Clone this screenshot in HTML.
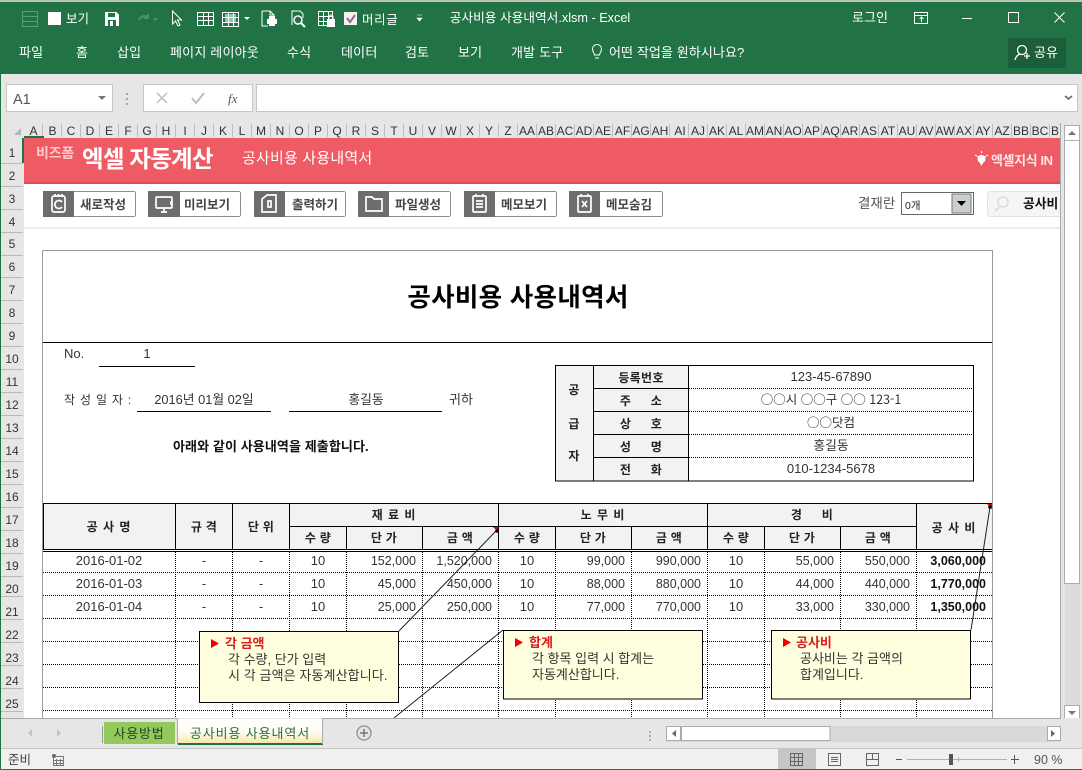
<!DOCTYPE html>
<html lang="ko"><head><meta charset="utf-8"><title>공사비용 사용내역서</title>
<style>
html,body{margin:0;padding:0;background:#fff;width:1082px;height:770px;overflow:hidden}
svg{display:block}
text{font-family:"Liberation Sans","Noto Sans CJK KR",sans-serif;font-size:13px;fill:#222}
.c{text-anchor:middle}.r{text-anchor:end}
.w{fill:#fff}.b{font-weight:bold}
.h text{font-size:12px;fill:#333;text-anchor:middle}
.rh text{font-size:12px;fill:#333;text-anchor:middle}
.th text{font-size:12px;font-weight:bold;fill:#222;text-anchor:middle;letter-spacing:.3px}
.d text{font-size:13px;fill:#333}
.d text.r{font-size:12.5px}
.cr{shape-rendering:crispEdges}
</style></head><body>
<svg width="1082" height="770" viewBox="0 0 1082 770" xmlns="http://www.w3.org/2000/svg">
<rect width="1082" height="770" fill="#e6e6e6"/>
<rect x="0" y="0" width="1082" height="2" fill="#b9c4b5"/>
<rect x="0" y="2" width="1082" height="72" fill="#217346"/>
<rect x="0" y="74" width="1" height="696" fill="#217346"/>
<rect x="0" y="769" width="1082" height="1" fill="#217346"/>

<!-- QAT -->
<g class="cr">
<g fill="none" stroke="#5f9a79"><rect x="22.5" y="11.5" width="15" height="15"/><path d="M22 16.5h16M22 21.5h16"/></g>
<rect x="48" y="12" width="13" height="13" fill="#fff"/>
<path d="M105 12h11l3 3v11h-14z" fill="#fff"/><rect x="108" y="13" width="7" height="4" fill="#217346"/><rect x="108" y="20" width="8" height="6" fill="#217346"/><rect x="110" y="21" width="3" height="5" fill="#fff"/>
<g fill="none" stroke="#fff"><rect x="197.5" y="12.5" width="16" height="13"/><path d="M197 16.5h17M197 20.5h17M203.5 13v13M208.5 13v13"/>
<rect x="222.5" y="12.5" width="16" height="14"/><path d="M222 17.5h17M222 22.5h17M228.5 13v13M233.5 13v13"/></g>
<rect x="225" y="14" width="11" height="8" fill="#fff" opacity=".55"/>
<rect x="344" y="12" width="13" height="13" fill="#f3f3f3"/>
</g>
<text x="66" y="23" class="w" style="font-size:12.5px">보기</text>
<path d="M139 20a6 6 0 0 1 9-3" fill="none" stroke="#4d8e6c" stroke-width="2"/><path d="M149 13v6h-6z" fill="#4d8e6c"/><path d="M153 18h5l-2.500 3z" fill="#4d8e6c"/>
<path d="M172.500 11v13l3-3 2.500 5 2-1-2.500-5h4z" fill="#217346" stroke="#fff"/>
<path d="M244 17h6l-3 3z" fill="#fff"/>
<path d="M262 11h8l4 4v5M262 11v15h6M270 11v4h4" fill="none" stroke="#fff"/><rect x="267" y="19" width="10" height="5" fill="#fff"/><rect x="269" y="16" width="6" height="3" fill="#fff"/><rect x="269" y="24" width="6" height="2" fill="#fff"/>
<path d="M292 25V11h8l3 3v4" fill="none" stroke="#fff"/><circle cx="298" cy="20" r="4" fill="none" stroke="#fff" stroke-width="1.500"/><path d="M301 23l4 4" stroke="#fff" stroke-width="2"/>
<g class="cr" fill="none" stroke="#fff"><rect x="318.500" y="11.500" width="14" height="14"/><path d="M318 16.500h15M318 21.500h15M323.500 12v14M328.500 12v14"/></g>
<rect x="327" y="19" width="8" height="8" fill="#fff"/><path d="M329 19v-2a2 2 0 0 1 4 0v2" fill="none" stroke="#fff"/>
<path d="M347 18l3 4 5-7" fill="none" stroke="#8e6f8e" stroke-width="2"/>
<text x="362" y="24" class="w" style="font-size:12.500px;letter-spacing:.6px">머리글</text>
<path d="M417 15h5M417 18h5l-2.500 3z" fill="#fff" stroke="#fff" stroke-width=".6"/>
<text x="540" y="22" class="c w" style="font-size:12.700px">공사비용 사용내역서.xlsm - Excel</text>
<text x="870" y="22" class="c w" style="font-size:13px">로그인</text>
<g class="cr" fill="none" stroke="#fff"><rect x="914.500" y="12.500" width="13" height="11"/><path d="M914 15.500h14"/><path d="M921.500 22v-5M919.500 19l2-2 2 2"/><path d="M962 18.500h10"/><rect x="1008.500" y="12.500" width="10" height="10"/></g>
<path d="M1054.500 12.500l10 10M1064.500 12.500l-10 10" stroke="#fff" fill="none"/>

<!-- menu -->
<g style="letter-spacing:.2px">
<text x="19" y="57" class="w">파일</text><text x="76" y="57" class="w">홈</text><text x="117" y="57" class="w">삽입</text>
<text x="170" y="57" class="w">페이지 레이아웃</text><text x="287" y="57" class="w">수식</text><text x="341" y="57" class="w">데이터</text>
<text x="405" y="57" class="w">검토</text><text x="458" y="57" class="w">보기</text><text x="511" y="57" class="w">개발 도구</text>
<text x="609" y="57" class="w" style="letter-spacing:.1px;font-size:13px">어떤 작업을 원하시나요?</text>
</g>
<path d="M594.500 55c0-2-2-3-2-6a4.500 4.500 0 0 1 9 0c0 3-2 4-2 6zM595 58h4" fill="none" stroke="#fff"/>
<rect x="1008" y="38" width="58" height="30" fill="#1b5e39"/>
<circle cx="1022" cy="50" r="4.500" fill="none" stroke="#fff" stroke-width="1.300"/><path d="M1015 60c1-4 3-5 5-6M1024 56h6M1027 53v6" fill="none" stroke="#fff" stroke-width="1.300"/>
<text x="1034" y="57" class="w">공유</text>

<!-- formula bar -->
<g class="cr" fill="#fff" stroke="#c6c6c6"><rect x="6.500" y="84.500" width="106" height="27"/><rect x="143.500" y="84.500" width="109" height="27"/><rect x="256.500" y="84.500" width="821" height="27"/></g>
<text x="13" y="104" style="font-size:14.500px;fill:#555">A1</text>
<path d="M98 96h8l-4 4z" fill="#777"/>
<g fill="#a6a6a6"><rect x="126" y="93" width="2" height="2"/><rect x="126" y="98" width="2" height="2"/><rect x="126" y="103" width="2" height="2"/></g>
<path d="M157 93l10 10M167 93l-10 10" stroke="#bdbdbd" stroke-width="1.500" fill="none"/>
<path d="M192 98l4 5 8-10" stroke="#bdbdbd" stroke-width="2" fill="none"/>
<text x="228" y="103" style="font-family:'Liberation Serif',serif;font-style:italic;font-size:13px;fill:#555">fx</text>
<path d="M1065 96l3.500 3 3.500-3" stroke="#666" stroke-width="1.600" fill="none"/>

<!-- column headers -->
<rect x="1" y="123" width="1059" height="15" fill="#e6e6e6"/>
<path d="M14 135l7-7v7z" fill="#b4b4b4"/>
<g class="h">
<text x="33.500" y="135">A</text><text x="52.500" y="135">B</text><text x="71" y="135">C</text><text x="90" y="135">D</text><text x="109" y="135">E</text><text x="128" y="135">F</text><text x="147" y="135">G</text><text x="166" y="135">H</text><text x="185" y="135">I</text><text x="204" y="135">J</text><text x="223" y="135">K</text><text x="242" y="135">L</text><text x="261" y="135">M</text><text x="280" y="135">N</text><text x="299" y="135">O</text><text x="318" y="135">P</text><text x="337" y="135">Q</text><text x="356" y="135">R</text><text x="375" y="135">S</text><text x="394" y="135">T</text><text x="413" y="135">U</text><text x="432" y="135">V</text><text x="451" y="135">W</text><text x="470" y="135">X</text><text x="489" y="135">Y</text><text x="508" y="135">Z</text><text x="527" y="135">AA</text><text x="546" y="135">AB</text><text x="565" y="135">AC</text><text x="584" y="135">AD</text><text x="603" y="135">AE</text><text x="622.500" y="135">AF</text><text x="641" y="135">AG</text><text x="660" y="135">AH</text><text x="680" y="135">AI</text><text x="698" y="135">AJ</text><text x="717" y="135">AK</text><text x="736" y="135">AL</text><text x="755" y="135">AM</text><text x="774" y="135">AN</text><text x="793" y="135">AO</text><text x="812" y="135">AP</text><text x="831" y="135">AQ</text><text x="850" y="135">AR</text><text x="869" y="135">AS</text><text x="888" y="135">AT</text><text x="907" y="135">AU</text><text x="926" y="135">AV</text><text x="945" y="135">AW</text><text x="964" y="135">AX</text><text x="983" y="135">AY</text><text x="1002" y="135">AZ</text><text x="1021" y="135">BB</text><text x="1040" y="135">BC</text><text x="1055" y="135">B</text>
</g>
<path class="cr" d="M42.500 124v13M61.500 124v13M80.500 124v13M99.500 124v13M118.500 124v13M137.500 124v13M156.500 124v13M175.500 124v13M194.500 124v13M213.500 124v13M232.500 124v13M251.500 124v13M270.500 124v13M289.500 124v13M308.500 124v13M327.500 124v13M346.500 124v13M365.500 124v13M384.500 124v13M403.500 124v13M422.500 124v13M441.500 124v13M460.500 124v13M479.500 124v13M498.500 124v13M517.500 124v13M536.500 124v13M555.500 124v13M574.500 124v13M593.500 124v13M612.500 124v13M631.500 124v13M650.500 124v13M669.500 124v13M688.500 124v13M707.500 124v13M726.500 124v13M745.500 124v13M764.500 124v13M783.500 124v13M802.500 124v13M821.500 124v13M840.500 124v13M859.500 124v13M878.500 124v13M897.500 124v13M916.500 124v13M935.500 124v13M954.500 124v13M973.500 124v13M992.500 124v13M1011.500 124v13M1030.500 124v13M1049.500 124v13" stroke="#bdbdbd"/>
<rect x="24" y="136" width="20" height="2" fill="#217346"/>

<!-- row header -->
<rect x="1" y="138" width="23" height="580" fill="#e6e6e6"/>
<rect x="22" y="138" width="2" height="25" fill="#217346"/>
<path class="cr" d="M1 163.500h22M1 186.500h22M1 209.500h22M1 232.500h22M1 255.500h22M1 277.500h22M1 300.500h22M1 323.500h22M1 346.500h22M1 369.500h22M1 392.500h22M1 415.500h22M1 438.500h22M1 461.500h22M1 484.500h22M1 507.500h22M1 530.500h22M1 553.500h22M1 576.500h22M1 596.500h22M1 619.500h22M1 642.500h22M1 665.500h22M1 688.500h22M1 711.500h22" stroke="#b9b9b9"/>
<g class="rh">
<text x="12" y="157">1</text><text x="12" y="180">2</text><text x="12" y="203">3</text><text x="12" y="226">4</text><text x="12" y="248">5</text><text x="12" y="271">6</text><text x="12" y="294">7</text><text x="12" y="317">8</text><text x="12" y="340">9</text><text x="12" y="363">10</text><text x="12" y="386">11</text><text x="12" y="409">12</text><text x="12" y="432">13</text><text x="12" y="455">14</text><text x="12" y="478">15</text><text x="12" y="501">16</text><text x="12" y="524">17</text><text x="12" y="547">18</text><text x="12" y="570">19</text><text x="12" y="593">20</text><text x="12" y="616">21</text><text x="12" y="639">22</text><text x="12" y="662">23</text><text x="12" y="685">24</text><text x="12" y="708">25</text>
</g>

<!-- sheet -->
<rect x="24" y="138" width="1036" height="580" fill="#fff"/>
<rect x="1060" y="123" width="1" height="595" fill="#a8a8a8"/>
<rect x="24" y="138" width="1036" height="46" fill="#ee5b64"/>
<rect x="24" y="182" width="1036" height="2" fill="#dc4f58"/>
<rect x="24" y="227" width="1036" height="2" fill="#ececec"/>
<text x="36" y="158" class="b" style="font-size:14px;fill:#ffc9cc;letter-spacing:-.2px">비즈폼</text>
<text x="82" y="167" class="w b" style="font-size:23.500px;letter-spacing:-.8px">엑셀 자동계산</text>
<text x="242" y="163" class="w" style="font-size:15px;letter-spacing:.2px">공사비용 사용내역서</text>
<path d="M977 156h9l-2 5-2.500 5-2.500-5z" fill="#fff"/><circle cx="981.500" cy="159" r="4" fill="#fff"/><path d="M981.500 151v2M975 155l2 1M988 155l-2 1" stroke="#fff"/>
<text x="991" y="165" style="font-size:13px;font-weight:bold;fill:#ffe5e6;letter-spacing:-.4px">엑셀지식 IN</text>

<!-- buttons -->
<g class="cr">
<rect x="43.500" y="191.500" width="92" height="25" rx="2" fill="#fff" stroke="#8c8c8c"/><rect x="43" y="191" width="31" height="26" fill="#6d6d6d"/>
<rect x="148.500" y="191.500" width="92" height="25" rx="2" fill="#fff" stroke="#8c8c8c"/><rect x="148" y="191" width="32" height="26" fill="#6d6d6d"/>
<rect x="254.500" y="191.500" width="91" height="25" rx="2" fill="#fff" stroke="#8c8c8c"/><rect x="254" y="191" width="31" height="26" fill="#6d6d6d"/>
<rect x="358.500" y="191.500" width="92" height="25" rx="2" fill="#fff" stroke="#8c8c8c"/><rect x="358" y="191" width="31" height="26" fill="#6d6d6d"/>
<rect x="464.500" y="191.500" width="92" height="25" rx="2" fill="#fff" stroke="#8c8c8c"/><rect x="464" y="191" width="31" height="26" fill="#6d6d6d"/>
<rect x="569.500" y="191.500" width="93" height="25" rx="2" fill="#fff" stroke="#8c8c8c"/><rect x="569" y="191" width="31" height="26" fill="#6d6d6d"/>
</g>
<g fill="none" stroke="#fff" stroke-width="1.700">
<rect x="52" y="196" width="13" height="16" rx="2"/><path d="M62 202a4 4 0 1 0 0 5M55 194v3M58.500 194v3M62 194v3"/>
<rect x="156" y="197" width="16" height="11" rx="1"/><path d="M161 212h6M164 208v4"/>
<path d="M262 199l5-4h9v17h-14zM268 201h3v6h-3z"/>
<path d="M366 211v-14h6l2 2h8v12z"/>
<rect x="473" y="196" width="13" height="16" rx="1"/><path d="M476 201h7M476 204h7M476 207h7M476 194v3M483 194v3"/>
<rect x="578" y="196" width="13" height="16" rx="1"/><path d="M582 201l5 6M587 201l-5 6M581 194v3M588 194v3"/>
</g>
<path d="M170 201v4l3-2z" fill="#fff"/>
<g>
<text x="80" y="209" style="font-size:12.500px;font-weight:bold;fill:#444">새로작성</text>
<text x="184" y="209" style="font-size:12.500px;font-weight:bold;fill:#444">미리보기</text>
<text x="292" y="209" style="font-size:12.500px;font-weight:bold;fill:#444">출력하기</text>
<text x="395" y="209" style="font-size:12.500px;font-weight:bold;fill:#444">파일생성</text>
<text x="501" y="209" style="font-size:12.500px;font-weight:bold;fill:#444">메모보기</text>
<text x="606" y="209" style="font-size:12.500px;font-weight:bold;fill:#444">메모숨김</text>
</g>
<text x="858" y="208" style="font-size:13.500px;fill:#555">결재란</text>
<g class="cr"><rect x="901.500" y="192.500" width="72" height="22" fill="#fff" stroke="#666"/><rect x="952" y="194" width="19" height="19" fill="#c9ced1" stroke="#777"/></g>
<path d="M957 201h9l-4.500 5z" fill="#000"/>
<text x="905" y="209" style="font-size:10.500px;fill:#222">0개</text>
<rect x="987.500" y="191.500" width="80" height="25" rx="3" fill="#f5f5f5" stroke="#e1e1e1"/>
<rect x="1060" y="190" width="1" height="30" fill="#a8a8a8"/><rect x="1061" y="190" width="3" height="30" fill="#e6e6e6"/>
<circle cx="1003" cy="202" r="5" fill="none" stroke="#dcdcdc" stroke-width="1.500"/><path d="M999 207l-4 4" stroke="#dcdcdc" stroke-width="2"/>
<text x="1023" y="208" class="b" style="font-size:12.800px;fill:#111">공사비</text>

<!-- form frame -->
<g class="cr">
<path d="M42.500 250.500H992.500V718M42.500 250.500V718" fill="none" stroke="#9a9a9a"/>
<path d="M43 342.500h949" stroke="#000"/>
<path d="M99 366.500h96M137 411.500h134M289 411.500h153" stroke="#000"/>
</g>
<text x="518" y="306" class="c b" style="font-size:25.500px;fill:#000;letter-spacing:.3px">공사비용 사용내역서</text>
<text x="64" y="358" style="fill:#333">No.</text><text x="147" y="358" class="c" style="fill:#333">1</text>
<text x="64" y="404" style="fill:#333;font-size:12px;letter-spacing:.8px">작 성 일 자 :</text>
<text x="204" y="404" class="c" style="fill:#333;font-size:12.800px">2016년 01월 02일</text>
<text x="366" y="404" class="c" style="fill:#333;font-size:12.800px">홍길동</text>
<text x="449" y="404" style="fill:#333;font-size:13px">귀하</text>
<text x="173" y="451" class="b" style="font-size:13px;fill:#111;letter-spacing:.1px">아래와 같이 사용내역을 제출합니다.</text>

<!-- supplier -->
<g class="cr">
<rect x="555" y="365" width="133" height="116" fill="#f2f2f2"/>
<rect x="555.500" y="365.500" width="418" height="115.500" fill="none" stroke="#000"/>
<path d="M593.500 365v116M688.500 365v116M593 388.500h95M593 411.500h95M593 434.500h95M593 457.500h95" stroke="#000" fill="none"/>
<path d="M689 388.500h284M689 411.500h284M689 434.500h284M689 457.500h284" stroke="#000" stroke-dasharray="1 1"/>
</g>
<g class="th">
<text x="574" y="394">공</text><text x="574" y="428">급</text><text x="574" y="460">자</text>
<text x="641" y="382">등록번호</text><text x="641" y="405">주 　 소</text><text x="641" y="428">상 　 호</text><text x="641" y="451">성 　 명</text><text x="641" y="474">전 　 화</text>
</g>
<g>
<text x="831" y="381" class="c" style="fill:#333">123-45-67890</text>
<text x="831" y="404" class="c" style="fill:#333;font-size:12.500px;font-family:'Noto Sans CJK KR',sans-serif">○○시 ○○구 ○○ 123-1</text>
<text x="831" y="427" class="c" style="fill:#333;font-size:12.500px;font-family:'Noto Sans CJK KR',sans-serif">○○닷컴</text>
<text x="831" y="450" class="c" style="fill:#333;font-size:12.800px">홍길동</text>
<text x="831" y="473" class="c" style="fill:#333">010-1234-5678</text>
</g>

<!-- main table -->
<rect x="43" y="504" width="949" height="45" fill="#f2f2f2"/>
<g class="cr" fill="none" stroke="#000">
<path d="M43 503.500h949M43 549.500h949M43 551.500h949"/>
<path d="M289 526.500h627M43.500 503v46M175.500 503v46M232.500 503v46M289.500 503v46M346.500 526v23M422.500 526v23M498.500 503v46M555.500 526v23M631.500 526v23M707.500 503v46M764.500 526v23M840.500 526v23M916.500 503v46"/>
<path stroke-dasharray="1 1" d="M43 572.500h949M43 595.500h949M43 618.500h949M43 641.500h949M43 664.500h949M43 687.500h949M43 710.500h949M175.500 552v166M232.500 552v166M289.500 552v166M346.500 552v166M422.500 552v166M498.500 552v166M555.500 552v166M631.500 552v166M707.500 552v166M764.500 552v166M840.500 552v166M916.500 552v166"/>
</g>
<g class="th">
<text x="109" y="531" style="letter-spacing:1px">공 사 명</text><text x="204" y="531">규 격</text><text x="261" y="531">단 위</text>
<text x="394" y="519" style="letter-spacing:1px">재 료 비</text><text x="603" y="519" style="letter-spacing:1px">노 무 비</text><text x="812" y="519">경 　 비</text>
<text x="954" y="532" style="letter-spacing:1px">공 사 비</text>
<text x="318" y="542">수 량</text><text x="384" y="542">단 가</text><text x="460" y="542">금 액</text>
<text x="527" y="542">수 량</text><text x="593" y="542">단 가</text><text x="669" y="542">금 액</text>
<text x="736" y="542">수 량</text><text x="802" y="542">단 가</text><text x="878" y="542">금 액</text>
</g>
<g class="d">
<text x="109" y="565" class="c">2016-01-02</text><text x="204" y="565" class="c">-</text><text x="261" y="565" class="c">-</text><text x="318" y="565" class="c">10</text><text x="416" y="565" class="r">152,000</text><text x="492" y="565" class="r">1,520,000</text><text x="527" y="565" class="c">10</text><text x="625" y="565" class="r">99,000</text><text x="701" y="565" class="r">990,000</text><text x="736" y="565" class="c">10</text><text x="834" y="565" class="r">55,000</text><text x="910" y="565" class="r">550,000</text><text x="986" y="565" class="r b" style="fill:#111">3,060,000</text>
<text x="109" y="588" class="c">2016-01-03</text><text x="204" y="588" class="c">-</text><text x="261" y="588" class="c">-</text><text x="318" y="588" class="c">10</text><text x="416" y="588" class="r">45,000</text><text x="492" y="588" class="r">450,000</text><text x="527" y="588" class="c">10</text><text x="625" y="588" class="r">88,000</text><text x="701" y="588" class="r">880,000</text><text x="736" y="588" class="c">10</text><text x="834" y="588" class="r">44,000</text><text x="910" y="588" class="r">440,000</text><text x="986" y="588" class="r b" style="fill:#111">1,770,000</text>
<text x="109" y="611" class="c">2016-01-04</text><text x="204" y="611" class="c">-</text><text x="261" y="611" class="c">-</text><text x="318" y="611" class="c">10</text><text x="416" y="611" class="r">25,000</text><text x="492" y="611" class="r">250,000</text><text x="527" y="611" class="c">10</text><text x="625" y="611" class="r">77,000</text><text x="701" y="611" class="r">770,000</text><text x="736" y="611" class="c">10</text><text x="834" y="611" class="r">33,000</text><text x="910" y="611" class="r">330,000</text><text x="986" y="611" class="r b" style="fill:#111">1,350,000</text>
</g>

<!-- comments -->
<path d="M399 631L497 530M503 630L394 718M971 630L990 507" stroke="#222" fill="none"/>
<path d="M493 527h5v5z" fill="#e00"/><path d="M987 504h5v5z" fill="#e00"/>
<circle cx="497" cy="531" r="1.800" fill="#000"/><circle cx="990" cy="507" r="1.800" fill="#000"/>
<g class="cr" fill="#ffffdf" stroke="#000"><rect x="199.500" y="631.500" width="199" height="71"/><rect x="503.500" y="630.500" width="199" height="68.500"/><rect x="771.500" y="630.500" width="199" height="68.500"/></g>
<path d="M211 639l8 4.500-8 4.500z" fill="#e00"/><path d="M515 638l8 4.500-8 4.500z" fill="#e00"/><path d="M783 638l8 4.500-8 4.500z" fill="#e00"/>
<g>
<text x="225" y="648" class="b" style="font-size:13px;fill:#d91c1c">각 금액</text>
<text x="228" y="664" style="font-size:13px;fill:#333">각 수량, 단가 입력</text>
<text x="228" y="680" style="font-size:13px;fill:#333;letter-spacing:.1px">시 각 금액은 자동계산합니다.</text>
<text x="529" y="647" class="b" style="font-size:13px;fill:#d91c1c">합계</text>
<text x="532" y="663" style="font-size:13px;fill:#333">각 항목 입력 시 합계는</text>
<text x="532" y="679" style="font-size:13px;fill:#333">자동계산합니다.</text>
<text x="796" y="647" class="b" style="font-size:13px;fill:#d91c1c">공사비</text>
<text x="800" y="663" style="font-size:13px;fill:#333">공사비는 각 금액의</text>
<text x="800" y="679" style="font-size:13px;fill:#333">합계입니다.</text>
</g>

<!-- vertical scrollbar -->
<rect x="1061" y="123" width="21" height="595" fill="#e6e6e6"/>
<rect x="1065" y="140" width="15" height="565" fill="#dcdcdc"/>
<g class="cr" fill="#fff" stroke="#ababab"><rect x="1064.500" y="125.500" width="15" height="15"/><rect x="1064.500" y="140.500" width="15" height="443"/><rect x="1064.500" y="705.500" width="15" height="14"/></g>
<path d="M1068 135l4-4 4 4z" fill="#777"/><path d="M1068 711h8l-4 4z" fill="#777"/>

<!-- tabs -->
<rect x="1" y="718" width="1081" height="30" fill="#e6e6e6"/>
<path class="cr" d="M1 718.500h177M322 718.500h739" stroke="#a8a8a8"/>
<path d="M32 729v8l-4-4zM57 729v8l4-4z" fill="#c4c4c4"/>
<rect x="102" y="726" width="1" height="17" fill="#999"/>
<rect x="104" y="722" width="71" height="22" fill="#92c85c"/>
<text x="139" y="738" class="c" style="font-size:13px;fill:#1f4a22;letter-spacing:.8px">사용방법</text>
<defs><linearGradient id="t" x1="0" y1="0" x2="0" y2="1"><stop offset="0" stop-color="#fff"/><stop offset=".5" stop-color="#fffdf2"/><stop offset="1" stop-color="#fbe3a6"/></linearGradient></defs>
<rect x="178" y="719" width="144" height="25" fill="url(#t)"/>
<rect x="178" y="743" width="145" height="2" fill="#217346"/>
<path class="cr" d="M177.500 718v26M322.500 718v26" stroke="#a8a8a8"/>
<text x="250" y="738" class="c" style="font-size:13px;fill:#217346;letter-spacing:.9px">공사비용 사용내역서</text>
<circle cx="364" cy="733" r="7" fill="none" stroke="#8e8e8e" stroke-width="1.300"/><path d="M360 733h8M364 729v8" stroke="#777" stroke-width="1.500"/>
<g fill="#b0b0b0"><rect x="649" y="731" width="2" height="2"/><rect x="649" y="735" width="2" height="2"/><rect x="649" y="739" width="2" height="2"/></g>
<rect x="666" y="726" width="395" height="16" fill="#d9d9d9"/>
<g class="cr" fill="#fff" stroke="#ababab"><rect x="666.500" y="726.500" width="14" height="14"/><rect x="681.500" y="726.500" width="148.500" height="14"/><rect x="1047.500" y="726.500" width="13" height="14"/></g>
<path d="M676 730v7l-4-3.500zM1051 730v7l4-3.500z" fill="#666"/>

<!-- status bar -->
<rect x="1" y="749" width="1081" height="20" fill="#f0f0f0"/>
<rect x="1" y="748" width="1081" height="1" fill="#c6c6c6"/>
<text x="8" y="764" style="font-size:12.500px;fill:#444">준비</text>
<circle cx="54" cy="756" r="2" fill="#666"/><g class="cr" fill="none" stroke="#777"><rect x="53.500" y="756.500" width="10" height="9"/><path d="M56.500 759v7M60.500 759v7M54 760.500h10M54 763.500h10"/></g>
<rect x="778" y="749" width="38" height="20" fill="#c6c6c6"/>
<g class="cr" fill="none" stroke="#666"><rect x="790.500" y="753.500" width="12" height="12"/><path d="M794.500 753v13M798.500 753v13M790 757.500h13M790 761.500h13"/>
<rect x="828.500" y="753.500" width="12" height="12"/><path d="M831 757.500h7M831 759.500h7M831 761.500h7"/>
<rect x="866.500" y="753.500" width="12" height="12"/><path d="M872.500 753v6M866 759.500h13"/></g>
<path class="cr" d="M896 759.500h6M1011 759.500h8M1014.500 755v9" stroke="#555" fill="none"/>
<path class="cr" d="M907 759.500h100M958.500 757v5" stroke="#b0b0b0" fill="none"/>
<rect x="949" y="754" width="4" height="11" fill="#555"/>
<text x="1034" y="764" style="font-size:12.500px;fill:#555">90 %</text>
</svg>
</body></html>
